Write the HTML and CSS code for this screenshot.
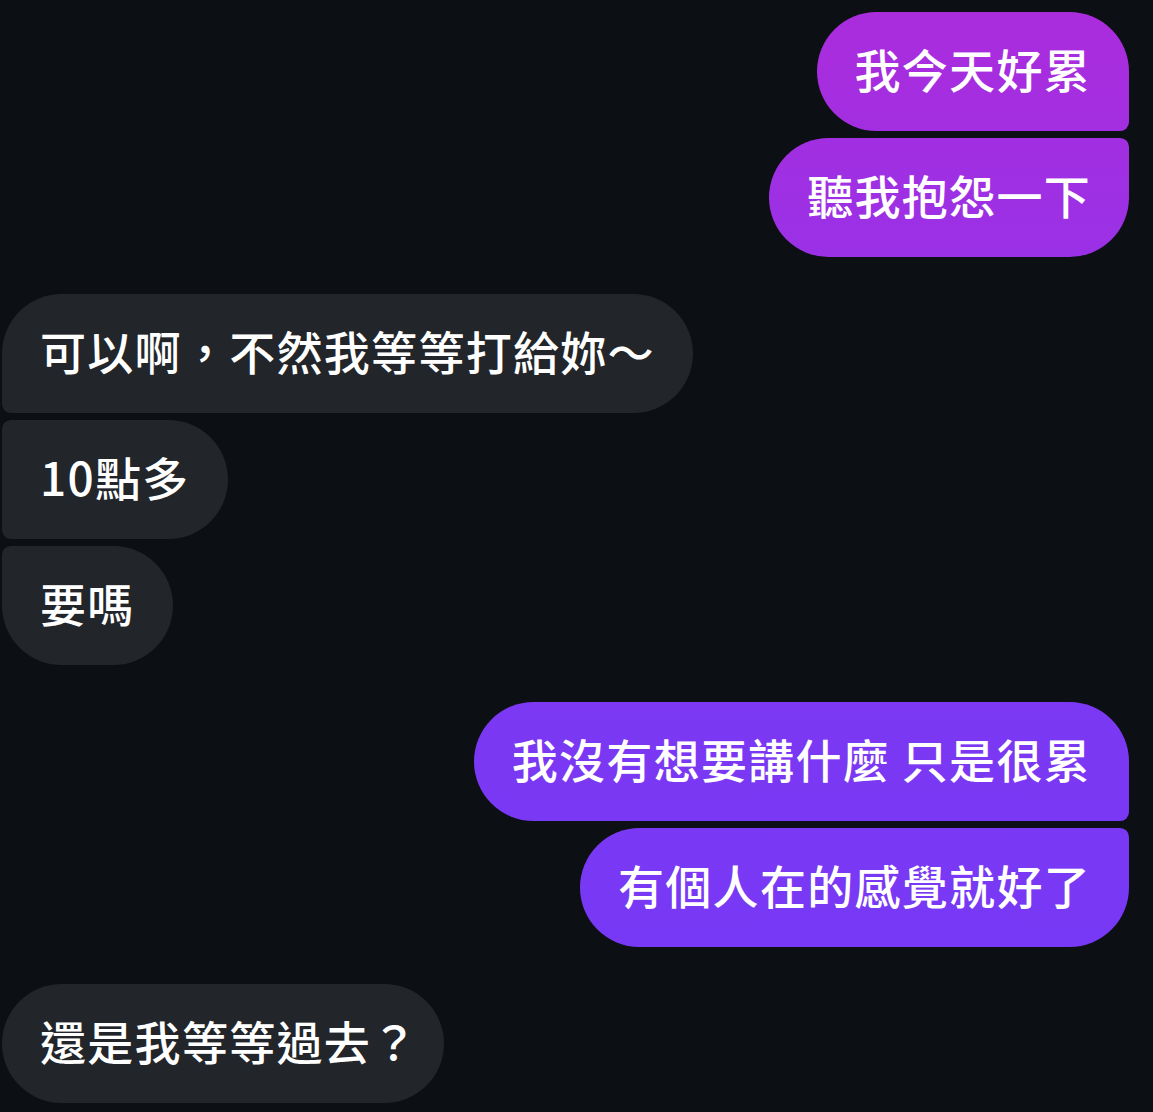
FILE: index.html
```html
<!DOCTYPE html>
<html lang="zh-Hant">
<head>
  <meta charset="UTF-8" />
  <meta name="viewport" content="width=device-width, initial-scale=1.0">
  <title>聊天</title>
  <link rel="stylesheet" href="styles.css">
</head>
<body>
  <div class="chat">
    <div class="group sent">
      <div class="bubble">我今天好累</div>
      <div class="bubble">聽我抱怨一下</div>
    </div>
    <div class="group received">
      <div class="bubble">可以啊，不然我等等打給妳～</div>
      <div class="bubble">10點多</div>
      <div class="bubble">要嗎</div>
    </div>
    <div class="group sent">
      <div class="bubble">我沒有想要講什麼 只是很累</div>
      <div class="bubble">有個人在的感覺就好了</div>
    </div>
    <div class="group received">
      <div class="bubble">還是我等等過去<span class="half">？</span></div>
    </div>
  </div>
</body>
</html>
```

FILE: styles.css
```css
html, body {
  background: #0c0f13;
}
body {
  margin: 0;
  font-family: "Noto Sans CJK TC", "Noto Sans", sans-serif;
  color: #ffffff;
}
.chat {
  display: flex;
  flex-direction: column;
  gap: 37px;
  padding: 12px 24px 0 2px;
}
.group {
  display: flex;
  flex-direction: column;
  gap: 7px;
}
.sent {
  align-items: flex-end;
}
.received {
  align-items: flex-start;
}
.bubble {
  font-size: 46px;
  font-weight: 500;
  letter-spacing: 1.3px;
  line-height: 61px;
  padding: 26px 38px 32px 38px;
  border-radius: 60px;
  white-space: nowrap;
}
.bubble .half {
  margin-right: -12px;
}
.sent .bubble {
  background: linear-gradient(180deg, #ab2cdc 0px, #9a31e6 260px, #7c38f3 700px, #7439f7 1112px);
  background-attachment: fixed;
}
.received .bubble {
  background: #222529;
}

/* grouped corners */
.sent .bubble:first-child:not(:last-child) { border-bottom-right-radius: 9px; }
.sent .bubble:last-child:not(:first-child) { border-top-right-radius: 9px; }
.sent .bubble:not(:first-child):not(:last-child) { border-top-right-radius: 9px; border-bottom-right-radius: 9px; }
.received .bubble:first-child:not(:last-child) { border-bottom-left-radius: 9px; }
.received .bubble:last-child:not(:first-child) { border-top-left-radius: 9px; }
.received .bubble:not(:first-child):not(:last-child) { border-top-left-radius: 9px; border-bottom-left-radius: 9px; }
```
